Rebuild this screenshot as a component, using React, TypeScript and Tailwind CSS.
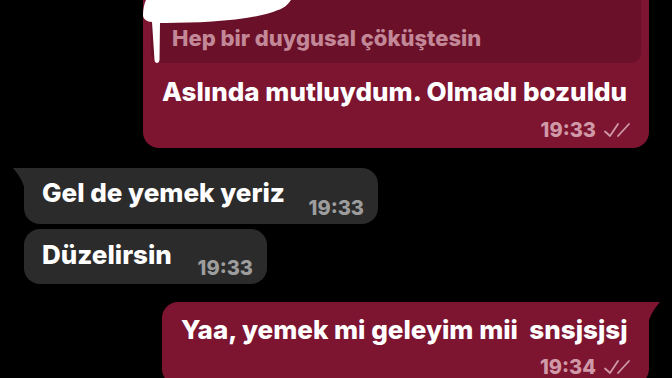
import React from 'react';

const font = { fontFamily: 'Inter, "Noto Sans", sans-serif' };

function Ticks() {
  return (
    <svg width="30" height="16" viewBox="0 0 30 16" fill="none" className="ml-[7px]">
      <path d="M2 9.5 L7 14 L15 2" stroke="currentColor" strokeWidth="1.8" strokeLinecap="round" strokeLinejoin="round" />
      <path d="M15 14 L26 2" stroke="currentColor" strokeWidth="1.8" strokeLinecap="round" />
    </svg>
  );
}

// white marker scribble hiding the quoted name
function Scribble() {
  return (
    <svg className="absolute left-0 top-[30px]" width="160" height="76" viewBox="0 0 160 76">
      <path
        d="M3 10 L152 0 C150 10 143 18 135 20 C112 30 62 33 22 33 L17 33 L16.5 70 C16 74 12 74 11.5 70 L9 32 C4 32 0 29 0 25 C0 20 1 14 3 10 Z"
        fill="#ffffff"
      />
    </svg>
  );
}

function OutTail() {
  return (
    <svg className="absolute right-[-12px] top-0" width="14" height="22" viewBox="0 0 14 22">
      <path d="M0 0 L13 0 C10 4 4 10 1 22 L0 22 Z" fill="#7d1430" />
    </svg>
  );
}

function InTail() {
  return (
    <svg className="absolute left-[-12px] top-0" width="14" height="22" viewBox="0 0 14 22">
      <path d="M14 0 L1 0 C4 4 10 10 13 22 L14 22 Z" fill="#2b2b2b" />
    </svg>
  );
}

export default function App() {
  return (
    <div className="w-[672px] h-[378px] bg-black overflow-hidden" style={font}>
      <div className="flex flex-col">
        <div className="relative ml-[143px] w-[506px] mt-[-40px] rounded-b-[16px] bg-[#7d1430] px-[8px] pt-[8px] pb-[8px]">
          <div className="relative rounded-[10px] bg-[#6b1029] pl-[21px] pt-[57px] pb-[11px]">
            <div className="text-[22px] leading-[27px] font-extrabold text-[#c28898]">Hep bir duygusal çöküştesin</div>
          </div>
          <Scribble />
          <div className="mt-[14px] pl-[11px] text-[26px] leading-[30px] font-extrabold text-white whitespace-nowrap">
            Aslında mutluydum. Olmadı bozuldu
          </div>
          <div className="flex items-center justify-end pr-[8px] h-[20px] mt-[13px] text-[#cf99a7]">
            <span className="text-[20px] leading-[20px] font-extrabold">19:33</span>
            <Ticks />
          </div>
        </div>

        <div className="relative mt-[20px] ml-[24px] flex w-[354px] items-end rounded-[16px] rounded-tl-none bg-[#2b2b2b] pl-[18px] pr-[14px] pt-[10px] pb-[5px]">
          <InTail />
          <span className="text-[26px] leading-[30px] font-extrabold text-white mb-[11px] whitespace-nowrap">Gel de yemek yeriz</span>
          <span className="ml-auto text-[20px] leading-[22px] font-extrabold text-[#9d9d9d]">19:33</span>
        </div>

        <div className="mt-[5px] ml-[24px] flex w-[243px] items-end rounded-[16px] bg-[#2b2b2b] pl-[18px] pr-[14px] pt-[11px] pb-[5px]">
          <span className="text-[26px] leading-[30px] font-extrabold text-white mb-[9px]">Düzelirsin</span>
          <span className="ml-auto text-[20px] leading-[22px] font-extrabold text-[#9d9d9d]">19:33</span>
        </div>

        <div className="relative mt-[18px] ml-[162px] w-[487px] rounded-[16px] rounded-tr-none bg-[#7d1430] pl-[19px] pr-[16px] pt-[13px] pb-[8px]">
          <OutTail />
          <div className="text-[26px] leading-[30px] font-extrabold text-white whitespace-pre">Yaa, yemek mi geleyim mii  snsjsjsj</div>
          <div className="flex items-center justify-end h-[20px] mt-[12px] text-[#cf99a7]">
            <span className="text-[20px] leading-[20px] font-extrabold">19:34</span>
            <Ticks />
          </div>
        </div>
      </div>
    </div>
  );
}
